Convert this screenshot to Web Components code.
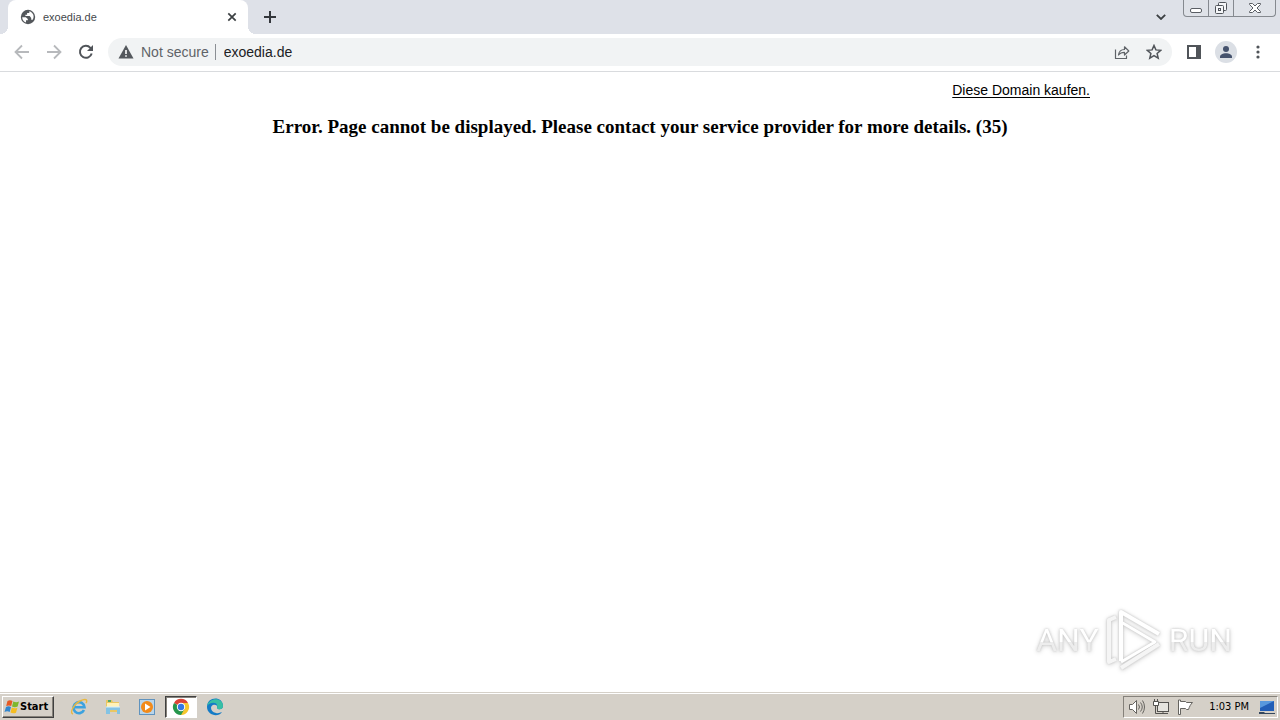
<!DOCTYPE html>
<html lang="en">
<head>
<meta charset="utf-8">
<title>exoedia.de</title>
<style>
html, body { margin: 0; height: 100%; }
body { font-family: "Liberation Sans", Arial, sans-serif; background: #fff; }
</style>
</head>
<body>
<desktop-screen></desktop-screen>
<script>
const define = (name, html) => customElements.define(name, class extends HTMLElement {
  constructor() {
    super();
    const t = document.createElement('template');
    t.innerHTML = `<style>
      *{box-sizing:border-box}
      button{border:0;padding:0;margin:0;background:none;font:inherit;color:inherit;display:flex;align-items:center;justify-content:center;flex:none}
      svg{display:block;flex:none}
    </style>` + html;
    this.attachShadow({ mode: 'open' }).append(t.content.cloneNode(true));
  }
});

define('browser-tab', `
<style>
:host{display:flex;align-items:center;flex:0 1 240px;height:34px;padding:0 8px 0 12px;gap:7px;background:#fff;border-radius:8px 8px 0 0;font-size:11px;color:#45484c;position:relative}
:host::before,:host::after{content:"";position:absolute;bottom:0;width:8px;height:8px}
:host::before{left:-8px;background:radial-gradient(circle at 0 0,transparent 8px,#fff 8px)}
:host::after{right:-8px;background:radial-gradient(circle at 100% 0,transparent 8px,#fff 8px)}
span{flex:1}
button{width:16px;height:16px}
</style>
<svg width="16" height="16" viewBox="0 0 16 16"><circle cx="8" cy="8" r="7.2" fill="#53575b"/><path d="M2.2 8.2h3.6l2 1.7v1.4H6v2.2C3.700 12.700 2.200 10.500 2.200 8.200zM9.300 2.300v1.800H7.100v1.600H5.400v1.200h4.300l1.500 2v1.800h1.500c2-2.900.8-7.200-3.400-8.400z" fill="#fff"/></svg>
<span><slot></slot></span>
<button aria-label="Close tab"><svg width="10" height="10" viewBox="0 0 10 10"><path d="M1.300 1.300l7.400 7.400M8.700 1.300L1.300 8.700" stroke="#3c4043" stroke-width="1.700"/></svg></button>
`);

define('window-controls', `
<style>
:host{display:flex;height:17px;border:1px solid #85898f;border-top:0;border-radius:0 0 4px 4px;background:#dfe2e8;overflow:hidden}
button{height:16px;width:25px;border-right:1px solid #85898f}
button:last-child{width:41px;border:0}
</style>
<button aria-label="Minimize"><svg width="14" height="14" viewBox="0 0 14 14"><rect x="1.500" y="7.500" width="11" height="4" rx="1.500" fill="#fff" stroke="#5a5e64"/></svg></button>
<button aria-label="Restore"><svg width="14" height="14" viewBox="0 0 14 14"><g fill="#f5f6f8" stroke="#50545a"><rect x="4.500" y="1.500" width="8" height="8" rx="1"/><rect x="1.500" y="4.500" width="8" height="8" rx="1"/><rect x="4.500" y="7.500" width="2" height="2"/></g></svg></button>
<button aria-label="Close"><svg width="14" height="12" viewBox="0 0 14 12"><path d="M1.500 1.500h3L7 4l2.500-2.500h3v1L9 6l3.500 3.500v1h-3L7 8l-2.500 2.500h-3v-1L5 6 1.500 2.500z" fill="#fff" stroke="#5a5e64"/></svg></button>
`);

define('tab-strip', `
<style>
:host{display:flex;height:34px;background:#dee1e8;padding:0 4px 0 8px}
.new{width:28px;height:34px;margin-left:8px}
.search{width:28px;height:34px;margin-left:auto;margin-right:8px}
</style>
<browser-tab>exoedia.de</browser-tab>
<button class="new" aria-label="New tab"><svg width="12" height="12" viewBox="0 0 12 12"><path d="M6 0v12M0 6h12" stroke="#34373c" stroke-width="2"/></svg></button>
<button class="search" aria-label="Search tabs"><svg width="10" height="6" viewBox="0 0 10 6"><path d="M.8.8L5 5 9.200.8" fill="none" stroke="#3c4043" stroke-width="1.800"/></svg></button>
<window-controls></window-controls>
`);

define('address-bar', `
<style>
:host{display:flex;align-items:center;flex:1;min-width:0;height:28px;border-radius:14px;background:#f1f3f4;padding:0 8px 0 10px;font-size:14px;color:#5f6368}
label{margin-left:7px;white-space:nowrap}
i{width:1px;height:16px;background:#8b8f94;margin:0 8px 0 6px}
input{flex:1;min-width:0;border:0;outline:0;padding:0;background:none;font:inherit;color:#202124}
button{width:20px;height:28px}
button+button{margin-left:12px}
</style>
<svg width="16" height="16" viewBox="0 0 16 16"><path d="M8 1l7.500 13.500H.5z" fill="#54585d"/><path d="M7.200 6h1.600v4H7.200zM7.200 11.200h1.600v1.600H7.200z" fill="#fff"/></svg>
<label for="url">Not secure</label><i></i><input id="url" value="exoedia.de" spellcheck="false">
<button aria-label="Share"><svg width="16" height="16" viewBox="0 0 16 16"><path d="M1.500 5.500v9h11v-3M4.500 11c.5-4 2.500-5.500 6-5.500V2.800L14.800 7l-4.300 4V8.300c-2.700 0-4.500.7-6 2.700z" fill="none" stroke="#5f6368" stroke-width="1.200" stroke-linejoin="round"/></svg></button>
<button aria-label="Bookmark this page"><svg width="16" height="16" viewBox="0 0 16 16"><path d="M8 1.500l1.900 4.400 4.800.4-3.600 3.200 1.100 4.700L8 11.700l-4.200 2.500 1.100-4.700L1.300 6.300l4.800-.4z" fill="none" stroke="#505459" stroke-width="1.500"/></svg></button>
`);

define('tool-bar', `
<style>
:host{box-sizing:border-box;display:flex;align-items:center;height:38px;background:#fff;border-bottom:1px solid #d9dbde;padding:0 8px 1px}
button{width:28px;height:28px;margin-right:4px}
address-bar{margin-left:4px;margin-right:8px}
.me{border-radius:50%}
.more{margin-right:0}
</style>
<button aria-label="Back"><svg width="16" height="16" viewBox="0 0 16 16"><path d="M15 8H2M8 1.500L1.500 8 8 14.500" fill="none" stroke="#b7b9bc" stroke-width="1.800"/></svg></button>
<button aria-label="Forward"><svg width="16" height="16" viewBox="0 0 16 16"><path d="M1 8h13M8 1.500L14.500 8 8 14.500" fill="none" stroke="#b7b9bc" stroke-width="1.800"/></svg></button>
<button aria-label="Reload"><svg width="16" height="16" viewBox="0 0 16 16"><path d="M13.700 9.500a6 6 0 1 1-1.300-5.700L14 5.500" fill="none" stroke="#505459" stroke-width="2"/><path d="M15 1v6H9z" fill="#505459"/></svg></button>
<address-bar></address-bar>
<button aria-label="Side panel"><svg width="14" height="14" viewBox="0 0 14 14"><path d="M1 1h12v12H1z" fill="none" stroke="#505459" stroke-width="2"/><path d="M9 1h4v12H9z" fill="#505459"/></svg></button>
<button class="me" aria-label="Profile"><svg width="22" height="22" viewBox="0 0 22 22"><circle cx="11" cy="11" r="11" fill="#dbdfe5"/><circle cx="11" cy="8" r="3" fill="#45526d"/><path d="M5 16c0-5 12-5 12 0v1H5z" fill="#45526d"/></svg></button>
<button class="more" aria-label="Menu"><svg width="4" height="14" viewBox="0 0 4 14" fill="#505459"><circle cx="2" cy="2" r="1.600"/><circle cx="2" cy="7" r="1.600"/><circle cx="2" cy="12" r="1.600"/></svg></button>
`);

define('water-mark', `
<style>
:host{display:flex;align-items:center;gap:6px;font:32px/40px Roboto,sans-serif;filter:drop-shadow(0 0 1px #c4c4c4) drop-shadow(0 1px 2px #d8d8d8)}
span{color:transparent;background:linear-gradient(#fff 55%,#ededed 55%);background-clip:text;-webkit-background-clip:text}
</style>
<span>ANY</span>
<svg width="58" height="64" viewBox="0 0 58 64"><g fill="none" stroke="#fff" stroke-width="4" stroke-linejoin="round"><path d="M16 53V4l38 22"/><path d="M16 14l34 20-34 20" stroke-width="3"/><path d="M11 9l-7 3v42l7-3M16 60l38-24" stroke="#f5f5f5"/></g></svg>
<span>RUN</span>
`);

define('web-page', `
<style>
:host{display:block;flex:1;min-height:0;position:relative;background:#fff;color:#000;padding-top:8px}
.buy{display:flex;justify-content:flex-end;max-width:900px;margin:0 auto;font-size:14px;line-height:20px}
a{color:inherit;text-underline-offset:2px}
h1{margin:16px 0 0;text-align:center;font:bold 19px/22px "Liberation Serif","Times New Roman",serif}
water-mark{position:absolute;right:48px;bottom:20px}
</style>
<div class="buy"><a href="#">Diese Domain kaufen.</a></div>
<h1>Error. Page cannot be displayed. Please contact your service provider for more details. (35)</h1>
<water-mark></water-mark>
`);

define('task-bar', `
<style>
:host{box-sizing:border-box;display:flex;align-items:center;height:28px;background:#d5d0c8;border-top:1px solid #d5d0c8;box-shadow:inset 0 1px #fff;padding:1px 2px 0;font:11px/14px "DejaVu Sans Condensed","DejaVu Sans",sans-serif;color:#000}
.start{width:52px;height:22px;justify-content:flex-start;padding-left:1px;font-weight:bold;border:1px solid;border-color:#fff #404040 #404040 #fff;box-shadow:inset -1px -1px #85817a}
nav{display:flex;margin-left:9px;gap:2px}
nav button{width:32px;height:22px}
nav .on{background:#fff;border:1px solid;border-color:#404040 #fff #fff #404040;box-shadow:inset 1px 1px #85817a}
.tray{display:flex;align-items:center;gap:8px;margin-left:auto;height:22px;padding:0 2px 0 5px;border:1px solid;border-color:#85817a #fff #fff #85817a}
time{margin:0 2px 0 8px;white-space:nowrap}
</style>
<button class="start"><svg width="16" height="16" viewBox="0 0 16 16"><path d="M3.500 2C5.500.8 7 1.200 8.500 2L7.200 7C5.700 6.200 4 6.200 2.200 7z" fill="#e65a24"/><path d="M9.300 2.500c2 1 3.800 1 5.700.1l-1.400 5c-2 .9-4 .8-5.600-.2z" fill="#7eb72e"/><path d="M2 8c1.800-.9 3.500-.8 5 .1L5.700 13c-1.700-1-3.400-.9-5.200 0z" fill="#3286ce"/><path d="M7.800 8.500c1.800 1 3.600 1.100 5.600.2l-1.400 5c-2 .8-3.800.7-5.500-.3z" fill="#f5bd22"/></svg>Start</button>
<nav>
<button aria-label="Internet Explorer"><svg width="18" height="18" viewBox="0 0 18 18"><path d="M14 12A5.500 5.500 0 1 1 14.500 9.300H5" fill="none" stroke="#3ca2df" stroke-width="2.600"/><path d="M3 16C-1 15 4 6 10 3s8-1 6 2" fill="none" stroke="#e9b83f" stroke-width="1.400"/></svg></button>
<button aria-label="File Explorer"><svg width="18" height="18" viewBox="0 0 18 18"><path d="M2 2h6l1 2h6v10H2z" fill="#e9c763"/><path d="M3 5h12v4H3z" fill="#fff2b8"/><path d="M4 2h3v2H4z" fill="#53a76b"/><path d="M2 9h14v7h-3v-4H6v4H2z" fill="#83c3e4"/><path d="M2 9h14" stroke="#d9f0fa"/></svg></button>
<button aria-label="Media Player"><svg width="18" height="18" viewBox="0 0 18 18"><rect x="1.500" y="1.500" width="15" height="15" fill="#b9d5ea" stroke="#6093be"/><circle cx="9" cy="9" r="6" fill="#f28a19"/><path d="M7 5.500v7L12.500 9z" fill="#fff"/></svg></button>
<button class="on" aria-label="Google Chrome"><svg width="18" height="18" viewBox="0 0 18 18"><path d="M9 9L2 5a8 8 0 0 1 14 0z" fill="#dc4437"/><path d="M9 9V5h7a8 8 0 0 1-7 12z" fill="#f6c62e"/><path d="M9 9l3.500 2L9 17A8 8 0 0 1 2 5z" fill="#26964c"/><circle cx="9" cy="9" r="4.200" fill="#fff"/><circle cx="9" cy="9" r="3.200" fill="#3478e5"/></svg></button>
<button aria-label="Microsoft Edge"><svg width="18" height="18" viewBox="0 0 18 18"><path d="M1 9c0-11 16-11 16-1 0 4-5 4-6 2 1-3-2-4-4-3-3 1-3 7 3 8 2 .5 4 0 6-1C12 20 1 17 1 9z" fill="#147bc6"/><path d="M1 8C3-1 17-1 17 8c0 4-5 4-6 2C13 4 5 3 1 8z" fill="#37bfa4"/></svg></button>
</nav>
<div class="tray">
<svg width="16" height="16" viewBox="0 0 16 16"><g fill="#fff" stroke="#65635f"><path d="M.5 5.500h3l4-4v13l-4-4h-3z"/><path d="M9.500 5.500q2 2.500 0 5M11.500 3.500q3.500 4.500 0 9M13.500 1.500q4 6.500 0 13" fill="none"/></g></svg>
<svg width="16" height="16" viewBox="0 0 16 16"><g fill="#e6e4df" stroke="#54524f"><rect x="4.500" y="3.500" width="11" height="9"/><path d="M6 14.500h9M10 12.500v2M2.500 6v8.500H6" fill="none"/><path d="M.5 2.500h5v4h-5zM1.500 0v3M4.500 0v3" fill="#fff"/></g></svg>
<svg width="16" height="16" viewBox="0 0 16 16"><path d="M1.500 1v14.500h2V9.500h5l1 1h2c1-3 2-5 4-7h-6l-1-1h-5V1z" fill="#fff" stroke="#65635f"/></svg>
<time>1:03 PM</time>
<svg width="16" height="16" viewBox="0 0 16 16"><path d="M1 2h14v10H1z" fill="#215eb7"/><path d="M1 2h14L1 9z" fill="#5798dd"/><path d="M0 13h5l1 1h10v1H0z" fill="#34475e"/></svg>
</div>
`);

define('desktop-screen', `
<style>:host{display:flex;flex-direction:column;min-height:100vh}</style>
<tab-strip></tab-strip><tool-bar></tool-bar><web-page></web-page><task-bar></task-bar>
`);
</script>
</body>
</html>
